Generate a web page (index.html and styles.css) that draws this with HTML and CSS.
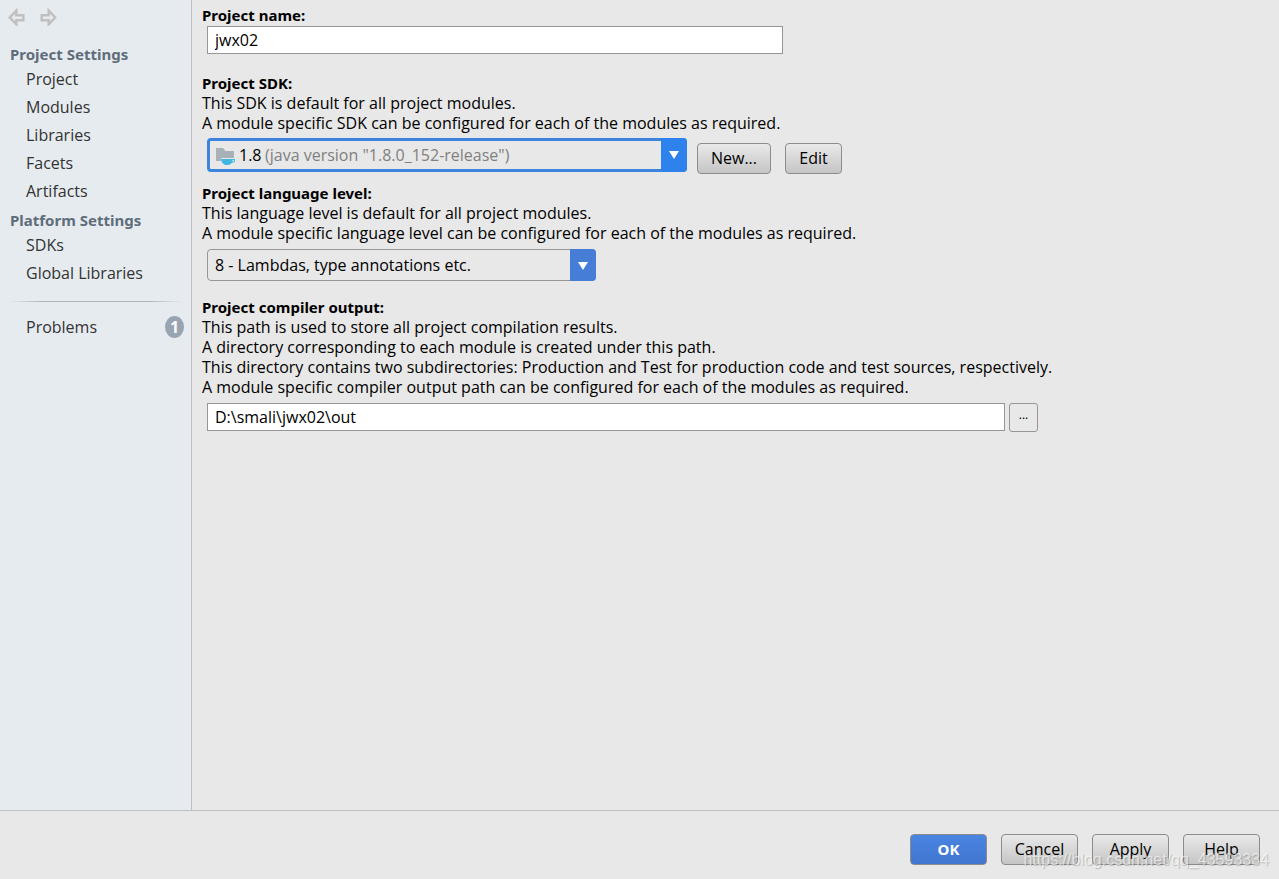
FILE: index.html
```html
<!DOCTYPE html>
<html lang="en">
<head>
  <meta charset="UTF-8">
  <title>Project Structure</title>
  <link rel="stylesheet" href="styles.css">
</head>
<body>

  <div class="workspace">
    <aside class="sidebar">
      <div class="history">
        <button type="button" aria-label="Back">
          <svg width="18" height="18" viewBox="0 0 18 18"><path d="M8.3 2.7 L1.8 9.5 L8.3 16.3 V12.2 H15.3 V7.2 H8.3 Z"/></svg>
        </button>
        <button type="button" aria-label="Forward">
          <svg width="18" height="18" viewBox="0 0 18 18"><path d="M9.7 2.7 L16.2 9.5 L9.7 16.3 V12.2 H2.7 V7.2 H9.7 Z"/></svg>
        </button>
      </div>
      <nav>
        <h2>Project Settings</h2>
        <a href="#project">Project</a>
        <a href="#modules">Modules</a>
        <a href="#libraries">Libraries</a>
        <a href="#facets">Facets</a>
        <a href="#artifacts">Artifacts</a>
        <h2>Platform Settings</h2>
        <a href="#sdks">SDKs</a>
        <a href="#global-libraries">Global Libraries</a>
        <div class="separator"></div>
        <a href="#problems">Problems <span class="count">1</span></a>
      </nav>
    </aside>

    <main id="project">
      <section>
        <label class="title" for="project-name">Project name:</label>
        <input class="field name-field" type="text" id="project-name" value="jwx02">
      </section>

      <section>
        <label class="title" for="project-sdk">Project SDK:</label>
        <p>This SDK is default for all project modules.</p>
        <p>A module specific SDK can be configured for each of the modules as required.</p>
        <div class="sdk-row">
          <div class="combo sdk-combo">
            <select id="project-sdk">
              <option>1.8</option>
            </select>
            <span class="sdk-label">
              <svg width="20" height="18" viewBox="0 0 20 18">
                <path fill="#a6b1b8" d="M0 1 H7 L9.5 4 H18 V11 H5 V14 H0 Z"/>
                <path fill="#40b6e0" fill-rule="evenodd" d="M5 12 H19 V15 L15.5 16 C14.5 17.5 13 18 11 18 C8 18 5.5 16 5 12 Z M16.5 13 V14.5 H18 V13 Z"/>
              </svg>
              <span class="sdk-version">(java version "1.8.0_152-release")</span>
            </span>
            <svg class="arrow" width="26" height="32" viewBox="0 0 26 32"><path d="M8 12 H18 L13 20 Z"/></svg>
          </div>
          <button type="button" class="btn new-btn">New...</button>
          <button type="button" class="btn edit-btn">Edit</button>
        </div>
      </section>

      <section>
        <label class="title" for="language-level">Project language level:</label>
        <p>This language level is default for all project modules.</p>
        <p>A module specific language level can be configured for each of the modules as required.</p>
        <div class="combo level-combo">
          <select id="language-level">
            <option>8 - Lambdas, type annotations etc.</option>
          </select>
          <svg class="arrow" width="26" height="32" viewBox="0 0 26 32"><path d="M8 13 H18 L13 21 Z"/></svg>
        </div>
      </section>

      <section>
        <label class="title" for="output-path">Project compiler output:</label>
        <p>This path is used to store all project compilation results.</p>
        <p>A directory corresponding to each module is created under this path.</p>
        <p>This directory contains two subdirectories: Production and Test for production code and test sources, respectively.</p>
        <p>A module specific compiler output path can be configured for each of the modules as required.</p>
        <div class="path-row">
          <input class="field" type="text" id="output-path" value="D:\smali\jwx02\out">
          <button type="button" class="browse">...</button>
        </div>
      </section>
    </main>
  </div>

  <footer>
    <button type="button" class="btn primary">OK</button>
    <button type="button" class="btn">Cancel</button>
    <button type="button" class="btn">Apply</button>
    <button type="button" class="btn">Help</button>
    <span class="watermark">https://blog.csdn.net/qq_43593334</span>
  </footer>

</body>
</html>
```
FILE: styles.css
```css
* {
  box-sizing: border-box;
}

body {
  margin: 0;
  min-height: 100vh;
  display: flex;
  flex-direction: column;
  background: #e8e8e8;
  color: #000;
  font: 16px/20px "Open Sans", "Noto Sans", sans-serif;
}

button,
input,
select {
  font: inherit;
  color: inherit;
}

.workspace {
  flex: 1;
  display: flex;
}

/* left navigation */
.sidebar {
  flex: 0 0 192px;
  background: #e6ebef;
  border-right: 1px solid #c0c0c0;
}

.history {
  display: flex;
  gap: 13px;
  padding: 8px 8px 13px;
}

.history button {
  display: flex;
  padding: 0;
  border: none;
  background: none;
}

.history path {
  fill: none;
  stroke: #c0c0c0;
  stroke-width: 2.5;
}

.sidebar h2 {
  margin: 0;
  padding: 5px 10px 1px;
  font: bold 15px/20px "Noto Sans", sans-serif;
  color: #5f6d7b;
}

.sidebar a {
  display: flex;
  justify-content: space-between;
  align-items: center;
  height: 28px;
  padding: 0 7px 0 26px;
  color: #333;
  text-decoration: none;
}

.separator {
  height: 1px;
  margin: 14px 8px 11px;
  background: linear-gradient(to right, transparent, #b0b4b8 20%, #b0b4b8 80%, transparent);
}

.count {
  width: 19px;
  height: 22px;
  border-radius: 50%;
  background: #98a4b1;
  color: #fff;
  font-weight: bold;
  line-height: 22px;
  text-align: center;
}

/* project page */
main {
  flex: 1;
  min-width: 0;
  padding: 5px 10px;
}

section {
  margin-bottom: 16px;
}

p {
  margin: 0;
}

.title {
  display: block;
  font: bold 15px/20px "Noto Sans", sans-serif;
}

.field {
  display: block;
  height: 28px;
  padding: 0 7px;
  border: 1px solid #969696;
  border-radius: 0;
  background: #fff;
}

.name-field {
  width: 576px;
  max-width: 100%;
  margin: 1px 0 19px 5px;
}

.combo {
  position: relative;
  display: flex;
}

.combo select {
  width: 100%;
  height: 32px;
  padding: 0 32px 0 7px;
  border: 1px solid #969696;
  border-radius: 4px;
  background: #e8e8e8;
  appearance: none;
}

.arrow {
  position: absolute;
  top: 0;
  right: 0;
  border-radius: 0 4px 4px 0;
  background: #467dd7;
  pointer-events: none;
}

.arrow path {
  fill: #fff;
}

.sdk-row {
  display: flex;
  margin: 5px 0 0 5px;
}

.sdk-combo {
  width: 480px;
}

.sdk-combo select {
  height: 34px;
  padding-left: 29px;
  border: 3px solid #3c84dc;
}

.sdk-combo .arrow {
  height: 34px;
  background: #2d82eb;
}

/* icon and version drawn over the select */
.sdk-label {
  position: absolute;
  top: 7px;
  left: 9px;
  display: flex;
  gap: 29px;
  color: #808080;
  pointer-events: none;
}

.sdk-label svg {
  margin-top: 2px;
}

.btn {
  height: 31px;
  padding: 0 0 2px;
  border: 1px solid #8c8c8c;
  border-radius: 4px;
  background: linear-gradient(#e9e9e9, #c5c5c5);
}

.new-btn {
  width: 74px;
  margin: 5px 0 0 10px;
}

.edit-btn {
  width: 57px;
  margin: 5px 0 0 14px;
}

section:has(.sdk-row) {
  margin-bottom: 9px;
}

.level-combo {
  width: 389px;
  margin: 6px 0 0 5px;
}

.path-row {
  display: flex;
  gap: 4px;
  margin: 6px 0 0 5px;
}

.path-row .field {
  width: 798px;
}

.browse {
  width: 29px;
  height: 29px;
  padding: 0 0 6px;
  border: 1px solid #969696;
  border-radius: 3px;
  background: none;
  font-size: 12px;
}

/* dialog buttons */
footer {
  position: relative;
  display: flex;
  justify-content: flex-end;
  gap: 14px;
  padding: 23px 19px 14px;
  border-top: 1px solid #c0c0c0;
}

footer .btn {
  width: 77px;
}

.btn.primary {
  background: linear-gradient(#4985e2, #4175cf);
  color: #fff;
  font: bold 15px/20px "Noto Sans", sans-serif;
}

.watermark {
  position: absolute;
  right: 10px;
  bottom: 9px;
  color: rgba(255, 255, 255, 0.6);
  font: 16px/20px "Liberation Sans", sans-serif;
  text-shadow: 1px 1px 1px rgba(0, 0, 0, 0.2);
  pointer-events: none;
}
```
